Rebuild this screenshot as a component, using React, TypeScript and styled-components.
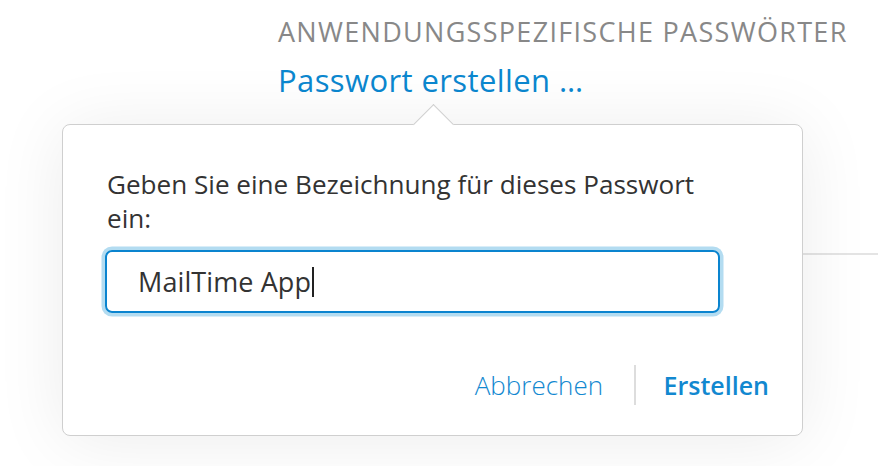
import React from 'react';
import styled, { createGlobalStyle } from 'styled-components';

const GlobalStyle = createGlobalStyle`
  html, body {
    margin: 0;
    padding: 0;
    background: #ffffff;
  }
  body {
    font-family: "Open Sans", "Noto Sans", sans-serif;
    -webkit-font-smoothing: antialiased;
  }
`;

const Page = styled.div`
  width: 878px;
  height: 466px;
  overflow: hidden;
  padding-top: 16px;
  box-sizing: border-box;
`;

const SectionHeader = styled.div`
  display: flex;
  flex-direction: column;
  margin-left: 278px;
`;

const SectionTitle = styled.div`
  font-size: 27px;
  line-height: 32px;
  color: #888888;
  letter-spacing: 1.3px;
  white-space: nowrap;
`;

const CreateLink = styled.a`
  margin-top: 12px;
  font-size: 31px;
  line-height: 40px;
  color: #0b87cf;
  letter-spacing: 0.4px;
  text-decoration: none;
  cursor: pointer;
`;

const Row = styled.div`
  display: flex;
  align-items: flex-start;
  margin-top: 24px;
`;

const Popover = styled.div`
  position: relative;
  flex: none;
  width: 741px;
  height: 312px;
  margin-left: 62px;
  box-sizing: border-box;
  display: flex;
  flex-direction: column;
  padding: 42px 33px 30px 44px;
  background: #ffffff;
  border: 1.5px solid #cfcfcf;
  border-radius: 8px;
  box-shadow: 0 4px 70px rgba(0, 0, 0, 0.08);

  &::before {
    content: '';
    position: absolute;
    top: -15px;
    left: 356px;
    width: 28px;
    height: 28px;
    background: #ffffff;
    border-top: 1.5px solid #cfcfcf;
    border-left: 1.5px solid #cfcfcf;
    transform: rotate(45deg);
  }
`;

const Rule = styled.div`
  flex: 1;
  height: 1.5px;
  margin-top: 129px;
  background: #e4e4e4;
`;

const Label = styled.p`
  margin: 0;
  font-size: 26.1px;
  line-height: 34px;
  color: #333333;
  width: 600px;
`;

const Field = styled.div`
  display: flex;
  align-items: center;
  width: 615px;
  height: 63px;
  margin: 15px 0 0 -2px;
  padding-left: 31px;
  box-sizing: border-box;
  border: 2px solid #0a84cf;
  border-radius: 7px;
  box-shadow: 0 0 0 3.5px #b3dcf1;
  font-size: 27px;
  color: #333333;
  letter-spacing: 0.1px;
`;

const Caret = styled.span`
  display: inline-block;
  width: 1.5px;
  height: 30px;
  margin-left: 1px;
  background: #222222;
`;

const Footer = styled.div`
  display: flex;
  align-items: center;
  justify-content: flex-end;
  margin-top: auto;
`;

const Action = styled.button<{ $primary?: boolean }>`
  padding: 0;
  border: none;
  background: none;
  font-family: inherit;
  font-size: ${(p) => (p.$primary ? 25 : 26)}px;
  color: #1288d0;
  font-weight: ${(p) => (p.$primary ? 600 : 300)};
  cursor: pointer;
`;

const Divider = styled.span`
  width: 1.5px;
  height: 40px;
  margin: 0 28px 0 31px;
  background: #dddddd;
`;

export default function App() {
  return (
    <Page>
      <GlobalStyle />
      <SectionHeader>
        <SectionTitle>ANWENDUNGSSPEZIFISCHE PASSWÖRTER</SectionTitle>
        <CreateLink>Passwort erstellen …</CreateLink>
      </SectionHeader>
      <Row>
        <Popover>
          <Label>Geben Sie eine Bezeichnung für dieses Passwort ein:</Label>
          <Field>
            MailTime App
            <Caret />
          </Field>
          <Footer>
            <Action>Abbrechen</Action>
            <Divider />
            <Action $primary>Erstellen</Action>
          </Footer>
        </Popover>
        <Rule />
      </Row>
    </Page>
  );
}
